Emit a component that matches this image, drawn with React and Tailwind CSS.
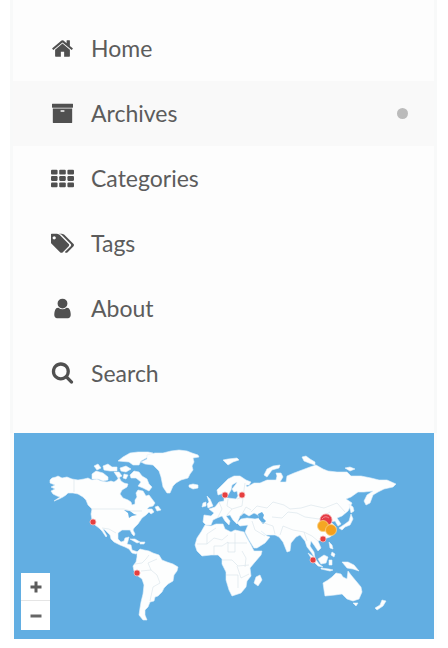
import React from 'react';

const icons = {
  home: (
    <path d="M1472 992v480q0 26-19 45t-45 19h-384v-384h-256v384h-384q-26 0-45-19t-19-45v-480q0-1 .5-3t.5-3l575-474 575 474q1 2 1 6zm223-69l-62 74q-8 9-21 11h-3q-13 0-21-7l-692-577-692 577q-12 8-24 7-13-2-21-11l-62-74q-8-10-7-23.5t11-21.5l719-599q32-26 76-26t76 26l244 204v-195q0-14 9-23t23-9h192q14 0 23 9t9 23v408l219 182q10 8 11 21.5t-7 23.5z" />
  ),
  archive: (
    <path
      fillRule="evenodd"
      d="M110 128h1572q32 0 32 32v256q0 32-32 32H110q-32 0-32-32V160q0-32 32-32zM142 500h1508v1100q0 32-32 32H174q-32 0-32-32zM786 650q-54 0-54 54t54 54h220q54 0 54-54t-54-54z"
    />
  ),
  grid: (
    <>
      {[210, 710, 1210].map((y) =>
        [0, 640, 1280].map((x) => <rect key={x + '-' + y} x={x} y={y} width="512" height="372" rx="80" />)
      )}
    </>
  ),
  tags: (
    <path d="M384 448q0-53-37.5-90.5t-90.5-37.5-90.5 37.5-37.5 90.5 37.5 90.5 90.5 37.5 90.5-37.5 37.5-90.5zm1067 576q0 53-37 90l-491 492q-39 37-91 37-53 0-90-37l-715-716q-38-37-64.5-101t-26.5-117v-416q0-52 38-90t90-38h416q53 0 117 26.5t102 64.5l715 714q37 39 37 91zm384 0q0 53-37 90l-491 492q-39 37-91 37-36 0-59-14t-53-45l470-470q37-37 37-90 0-52-37-91l-715-714q-38-38-102-64.5t-117-26.5h224q53 0 117 26.5t102 64.5l715 714q37 39 37 91z" />
  ),
  user: (
    <path d="M1536 1399q0 109-62.5 187t-150.5 78h-854q-88 0-150.5-78t-62.5-187q0-85 8.5-160.5t31.5-152 58.5-131 94-89 134.5-34.5q131 128 313 128t313-128q76 0 134.5 34.5t94 89 58.5 131 31.5 152 8.5 160.5zm-256-887q0 159-112.5 271.5t-271.5 112.5-271.5-112.5-112.5-271.5 112.5-271.5 271.5-112.5 271.5 112.5 112.5 271.5z" />
  ),
  search: (
    <path d="M1216 832q0-185-131.5-316.5t-316.5-131.5-316.5 131.5-131.5 316.5 131.5 316.5 316.5 131.5 316.5-131.5 131.5-316.5zm512 832q0 52-38 90t-90 38q-54 0-90-38l-343-342q-179 124-399 124-143 0-273.5-55.5t-225-150-150-225-55.5-273.5 55.5-273.5 150-225 225-150 273.5-55.5 273.5 55.5 225 150 150 225 55.5 273.5q0 220-124 399l343 343q37 37 37 90z" />
  ),
};

const items = [
  { label: 'Home', icon: 'home', box: '0 0 1792 1792' },
  { label: 'Archives', icon: 'archive', box: '0 0 1792 1792', active: true },
  { label: 'Categories', icon: 'grid', box: '0 0 1792 1792' },
  { label: 'Tags', icon: 'tags', box: '0 0 1835 1792' },
  { label: 'About', icon: 'user', box: '0 0 1792 1792' },
  { label: 'Search', icon: 'search', box: '0 100 1792 1792' },
];

const land = [
  // North America
  'M50 480L52 478 56 477 58 476 62 478 67 477 72 479 78 480 84 479 88 478 92 480 97 479 101 481 107 482 111 481 114 482 117 480 119 477 121 481 124 483 128 484 127 487 122 490 120 494 123 498 128 500 131 502 132 505 135 504 135 500 137 497 136 493 138 490 143 491 146 496 149 495 152 499 155 503 153 506 149 507 147 509 152 509 154 512 151 514 149 512 146 515 142 518 140 521 138 524 134 528 133 530 135 534 134 536 132 534 130 530 126 530 122 530 118 533 118 539 121 542 124 541 125 538 129 537 128 541 127 544 131 545 132 550 135 551 138 552 136 554 132 553 129 549 125 547 120 545 114 542 111 539 110 535 105 530 103 529 107 536 106 537 102 531 99 528 95 525 92 520 91 514 92 509 88 505 86 500 83 497 78 494 73 493 68 493 66 495 63 497 59 499 54 501 60 497 57 496 53 494 51 491 55 489 51 487 55 485 50 483Z',
  // Arctic islands
  'M92 474L96 471 103 473 108 477 108 480 103 481 98 479 92 479Z',
  'M94 466L98 464 101 468 97 470Z',
  'M103 466L108 464 112 467 117 467 117 471 110 471 104 470Z',
  'M118 461L123 457 130 453 138 452 148 452 153 453 148 457 141 461 139 465 133 465 129 462Z',
  'M114 472L119 472 122 476 118 478Z',
  'M120 468L126 466 131 469 126 472 121 471Z',
  'M130 475L134 471 139 472 142 476 147 479 149 484 152 487 149 491 143 488 138 486 141 482 136 478 131 478Z',
  'M124 474L128 475 126 479 123 478Z',
  // Greenland
  'M141 462L147 459 147 455 155 453 163 453 171 451 179 450 187 451 192 453 198 455 199 457 193 458 194 462 192 466 193 470 190 474 188 478 181 480 176 483 173 486 170 493 167 493 163 487 162 482 161 477 159 471 153 465 145 464Z',
  'M189 485L193 484 198 485 198 488 193 489 189 487Z',
  // Newfoundland and Caribbean
  'M155 507L158 506 161 510 157 511Z',
  'M130 539L135 539 140 542 137 543Z',
  'M140 542L145 542 144 544 140 544Z',
  // South America
  'M137 552L140 549 144 550 149 551 153 553 159 555 162 560 167 562 173 564 178 567 177 571 174 575 173 581 168 584 164 588 162 592 158 596 155 597 154 601 150 602 148 607 145 610 145 615 147 620 143 620 139 615 140 608 141 602 143 594 144 585 142 579 138 576 134 571 133 566 136 562 137 557Z',
  // Africa
  'M205 525L211 526 216 524 223 524 225 529 231 532 235 530 244 532 247 538 251 545 254 551 262 551 261 555 255 562 250 568 251 576 247 581 246 587 241 593 232 596 229 590 226 580 226 572 222 564 222 559 218 555 211 555 202 556 197 551 195 545 197 538 201 532Z',
  'M260 575L262 580 258 586 254 583 256 577Z',
  // Eurasia
  'M204 515L211 516 214 513 209 509 215 507 219 502 224 501 224 497 228 498 236 499 238 496 237 491 234 492 232 489 236 484 237 482 232 485 231 490 228 495 225 497 224 493 218 495 217 490 222 485 228 479 234 476 240 476 246 480 251 482 249 485 246 485 247 487 254 483 260 483 267 480 276 480 277 476 276 473 281 473 283 477 280 482 286 482 287 476 294 473 302 470 310 467 316 465 323 469 328 471 337 472 347 472 351 476 361 476 371 478 379 480 387 480 396 484 393 487 384 489 378 492 373 495 370 503 366 505 364 501 367 495 373 491 364 492 358 492 351 497 346 499 352 503 348 511 342 516 337 518 341 524 338 526 335 521 331 522 336 527 335 533 330 537 324 539 318 541 321 548 318 551 314 545 311 541 310 546 314 552 315 558 311 552 307 547 305 541 300 535 296 537 291 543 290 551 287 552 283 542 279 537 275 535 266 535 261 531 267 536 270 537 265 543 257 548 254 548 249 540 245 532 248 525 240 526 237 523 241 519 247 518 255 519 260 518 258 515 254 513 249 516 244 513 240 516 238 521 237 524 233 520 230 515 226 516 230 521 229 525 225 521 222 516 217 518 213 520 211 525 206 525 203 522Z',
  // Britain and Ireland
  'M207 496L210 499 213 506 208 508 207 504 209 502Z',
  'M203 503L206 502 206 506 202 507Z',
  // Arctic Eurasia
  'M223 460L228 459 237 458 239 460 233 462 228 465Z',
  'M264 475L267 469 273 466 280 465 279 468 272 470 267 477Z',
  'M302 457L306 456 310 459 315 462 315 465 309 463 304 461Z',
  'M345 468L350 467 355 469 350 471Z',
  // Japan
  'M349 504L353 507 354 511 351 513Z',
  'M351 514L353 519 350 525 345 527 342 530 339 528 345 524 349 521Z',
  // South-east Asia and Oceania
  'M308 553L314 557 319 564 323 567 318 566 313 561Z',
  'M318 559L324 555 328 557 326 563 321 564Z',
  'M329 542L332 545 333 549 330 548Z',
  'M332 552L335 554 334 557 331 555Z',
  'M329 560L332 560 332 565 329 565Z',
  'M321 568L329 569 333 570 330 571 321 569Z',
  'M342 562L348 562 354 565 359 571 353 569 347 568Z',
  'M323 583L328 580 332 577 336 573 341 574 343 577 347 579 348 571 351 575 356 581 361 587 362 592 359 599 353 601 347 599 342 594 335 595 325 596 324 590Z',
  'M353 603L358 603 356 606Z',
  'M382 600L386 601 383 606 377 610 375 608 380 605Z',
];

const seas = [
  'M258 514L262 512 264 515 263 518 266 521 263 524 259 519Z',
  'M124 510L130 511 134 514 137 515 132 516 129 518 128 513Z',
];

const borders =
  'M91 509L124 509 131 511 142 511M74 479V492M102 528L109 529 116 533M135 564L142 563 146 559 149 555M141 571L151 570 157 575 160 583 153 587 150 601M151 570L148 563 157 559M197 544H207V534L216 528M207 544L214 538 222 540 228 535M214 555V546H222L228 542V552H235V533M228 543L247 543M222 560L232 560 238 566 249 565M226 575H238V588M237 566L241 578 249 574M242 551L246 558 245 567M218 517L222 509 219 502M227 515L232 509 227 506 228 499M232 509L242 506 243 498M241 516L246 507 251 510M237 499L243 497 245 483M251 512L257 506 267 508 273 502 284 505 290 509 301 508 311 505 324 508 337 503 345 512M272 517L282 518 288 512 297 513 305 517 319 519 330 512M280 535L283 526 293 530 304 532 307 541M261 522L273 526 275 534M252 521L255 530 265 536M304 532L312 536 318 541';

const pins = [
  [93, 522], [137, 573], [225, 495], [242, 495], [313, 560], [323, 539],
];

function WorldMap() {
  return (
    <svg viewBox="14 433 420 206" role="img" aria-label="World map of visitors" className="block w-full bg-[#62aee2]">
      <g fill="#fdfefe" stroke="#e6f2fa" strokeWidth="0.6" strokeLinejoin="round">
        {land.map((d) => (
          <path key={d} d={d} />
        ))}
      </g>
      <g fill="#62aee2">
        {seas.map((d) => (
          <path key={d} d={d} />
        ))}
      </g>
      <path d={borders} fill="none" stroke="#d6e2e9" strokeWidth="0.6" />
      {pins.map(([x, y]) => (
        <circle key={x} cx={x} cy={y} r="3" fill="#e63f3f" stroke="#f7b9b9" strokeWidth="0.8" />
      ))}
      <circle cx="326" cy="520" r="6" fill="#e53b46" stroke="#f5a3a3" strokeWidth="0.8" />
      <path d="M322 519Q325 515 329 518" fill="none" stroke="#f59aa0" strokeWidth="0.8" />
      <circle cx="323" cy="526" r="5.5" fill="#f5a623" stroke="#f9cf85" strokeWidth="0.8" />
      <circle cx="331" cy="530" r="5.5" fill="#f5a01c" stroke="#f9cf85" strokeWidth="0.8" />
    </svg>
  );
}

export default function App() {
  return (
    <div className="bg-white pr-[11px] pb-2 pl-[10px] font-['Lato',sans-serif] text-[#5c5c5c]">
      <aside className="bg-[#fdfdfd]">
        <nav className="border-x-3 border-[#f8f9f9] pt-4 pb-[27px]">
          <ul>
            {items.map((item) => (
              <li key={item.label}>
                <a
                  href={'#' + item.label.toLowerCase()}
                  className={
                    'flex h-[65px] items-center gap-[17px] pr-[26px] pl-[38px] text-[23px] ' +
                    (item.active ? 'bg-[#f9f9f9]' : '')
                  }
                >
                  <svg viewBox={item.box} className="size-[23px] shrink-0" fill="#505050" aria-hidden="true">
                    {icons[item.icon]}
                  </svg>
                  <span>{item.label}</span>
                  {item.active && <span className="ml-auto size-[11px] rounded-full bg-[#bbbbbb]" />}
                </a>
              </li>
            ))}
          </ul>
        </nav>
        <div className="relative mr-[3px] ml-1">
          <WorldMap />
          <div className="absolute bottom-[9px] left-[7px] flex w-[29px] flex-col divide-y divide-[#e5e5e5] bg-white">
            <button type="button" aria-label="Zoom in" className="flex h-7 items-center justify-center">
              <svg viewBox="0 0 12 12" className="size-3" stroke="#5c5c5c" strokeWidth="3">
                <path d="M6 0.5V11.5M0.5 6H11.5" />
              </svg>
            </button>
            <button type="button" aria-label="Zoom out" className="flex h-[29px] items-center justify-center">
              <svg viewBox="0 0 12 12" className="size-3" stroke="#666666" strokeWidth="3">
                <path d="M0.5 6H11.5" />
              </svg>
            </button>
          </div>
        </div>
      </aside>
    </div>
  );
}
